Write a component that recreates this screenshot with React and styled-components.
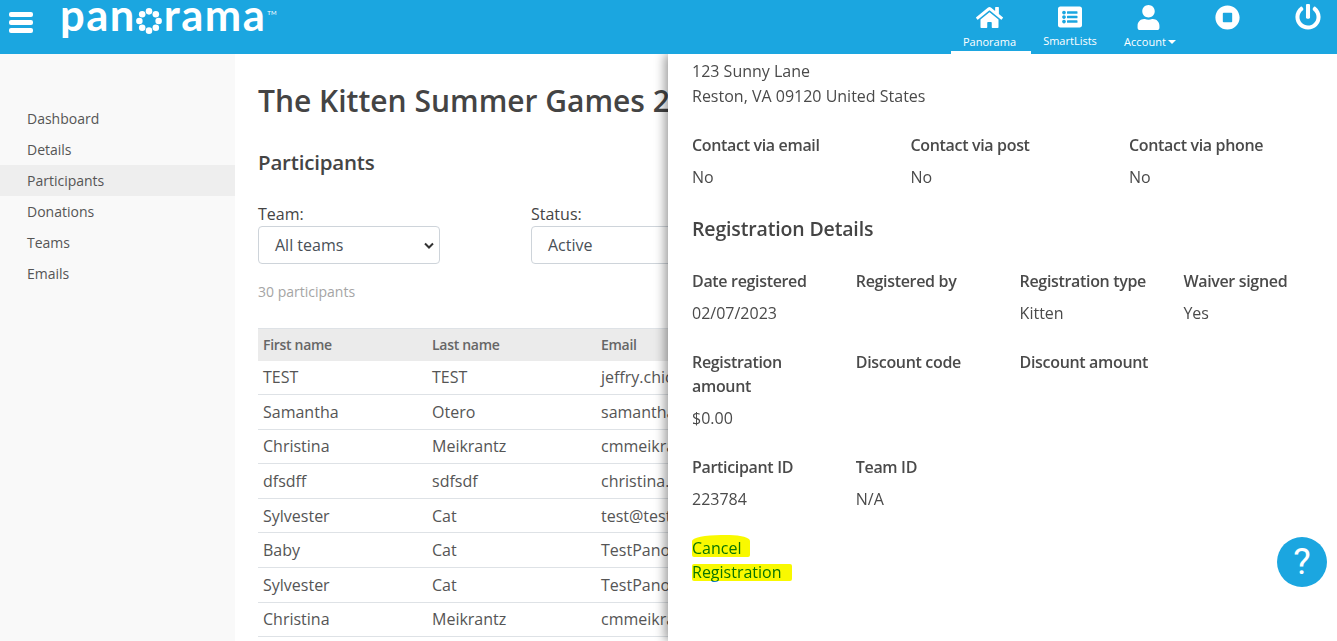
import React from "react";
import styled, { createGlobalStyle } from "styled-components";
import { FaHome, FaListAlt, FaUser, FaStopCircle, FaPowerOff } from "react-icons/fa";

const Global = createGlobalStyle`
  html, body { margin: 0; padding: 0; height: 100%; overflow: hidden; background: #fff; }
  body { font-family: "Open Sans", "Liberation Sans", sans-serif; color: #495057; font-size: 16px; }
  #root { height: 100%; }
`;

const Page = styled.div`
  position: relative;
  width: 1337px;
  height: 641px;
  overflow: hidden;
  display: flex;
  flex-direction: column;
`;

const Header = styled.header`
  height: 54px;
  flex: none;
  background: #1ba6e0;
  display: flex;
  align-items: flex-start;
  position: relative;
  z-index: 3;
`;

const Burger = styled.div`
  margin: 12px 0 0 9px;
  width: 24px;
  display: flex;
  flex-direction: column;
  gap: 3px;
`;
const BurgerBar = styled.span`
  display: block;
  height: 5px;
  background: #fff;
  border-radius: 2px;
`;

const Logo = styled.div`
  margin: 0 0 0 27px;
  display: flex;
  align-items: baseline;
  color: #fff;
  font-family: "Lato", sans-serif;
  font-weight: 700;
  font-size: 43.5px;
  line-height: 28px;
  letter-spacing: 1.5px;
`;
const LogoDots = styled.svg`
  width: 26px;
  height: 26px;
  margin: 8px 2px 0 0;
  align-self: flex-start;
`;
const Tm = styled.sup`
  font-size: 6px;
  font-weight: 400;
  line-height: 1;
  align-self: flex-start;
  margin: 10px 0 0 1px;
  letter-spacing: 0;
`;

const Nav = styled.nav`
  margin-left: auto;
  display: flex;
  height: 54px;
`;
const NavItem = styled.div`
  width: ${p => p.$w}px;
  height: 54px;
  box-sizing: border-box;
  color: #fff;
  display: flex;
  flex-direction: column;
  align-items: center;
  padding-left: ${p => p.$pl || 0}px;
  padding-right: ${p => p.$pr || 0}px;
  border-bottom: ${p => (p.$active ? "3px solid #fff" : "3px solid transparent")};
  font-size: 11px;
  line-height: 14px;
`;
const NavIcon = styled.div`
  height: ${p => p.$h || 35}px;
  margin-right: ${p => p.$mr || 0}px;
  display: flex;
  align-items: center;
  justify-content: center;
  font-size: ${p => p.$size}px;
  svg { display: block; }
`;
const Caret = styled.span`
  display: inline-block;
  width: 0;
  height: 0;
  margin-left: 2px;
  vertical-align: 2px;
  border-left: 4px solid transparent;
  border-right: 4px solid transparent;
  border-top: 4px solid #fff;
`;
const AccountLabel = styled.span`
  letter-spacing: 0.1px;
`;

const Body = styled.div`
  flex: 1;
  display: flex;
  min-height: 0;
`;

const Sidebar = styled.aside`
  width: 235px;
  flex: none;
  background: #f9f9f9;
  padding-top: 49px;
  box-sizing: border-box;
`;
const SideItem = styled.div`
  height: 31px;
  line-height: 31px;
  padding-left: 27px;
  font-size: 14px;
  color: #555;
  background: ${p => (p.$active ? "#eeeeee" : "transparent")};
`;

const Main = styled.main`
  flex: 1;
  padding: 0 0 0 23px;
  min-width: 0;
  overflow: hidden;
  white-space: nowrap;
`;
const Title = styled.h1`
  margin: 25px 0 0;
  font-size: 30px;
  line-height: 44px;
  font-weight: 600;
  color: #444;
`;
const SubTitle = styled.h2`
  margin: 24px 0 0;
  font-size: 20.5px;
  line-height: 30px;
  font-weight: 600;
  letter-spacing: -0.2px;
  color: #444;
`;
const Filters = styled.div`
  display: flex;
  gap: 91px;
  margin-top: 27px;
`;
const Filter = styled.div`
  width: 182px;
  flex: none;
`;
const FilterLabel = styled.div`
  font-size: 16px;
  line-height: 20px;
  height: 22px;
  color: #444;
`;
const Select = styled.div`
  height: 38px;
  width: ${p => p.$w || 182}px;
  box-sizing: border-box;
  border: 1px solid #ced4da;
  border-radius: 4px;
  padding-left: 16px;
  line-height: 36px;
  display: flex;
  justify-content: space-between;
  align-items: center;
  color: #495057;
`;
const Chevron = styled.svg`
  width: 10px;
  height: 7px;
  margin-right: 5px;
`;
const Count = styled.div`
  margin-top: 18px;
  font-size: 14px;
  line-height: 20px;
  color: #a5a5a5;
`;
const Table = styled.div`
  margin-top: 26px;
  width: 1000px;
`;
const HeadRow = styled.div`
  display: grid;
  grid-template-columns: 169px 169px 1fr;
  height: 32.5px;
  align-items: center;
  background: #ebebeb;
  border-top: 1px solid #dee2e6;
  box-sizing: border-box;
  padding-left: 5px;
  font-size: 14px;
  font-weight: 600;
  letter-spacing: -0.3px;
  color: #666;
`;
const Row = styled.div`
  display: grid;
  grid-template-columns: 169px 169px 1fr;
  height: 34.6px;
  align-items: center;
  border-bottom: 1px solid #dee2e6;
  box-sizing: border-box;
  padding-left: 5px;
  color: #555;
`;

const Panel = styled.section`
  position: absolute;
  z-index: 2;
  top: 54px;
  right: 0;
  bottom: 0;
  width: 669px;
  background: #fff;
  box-sizing: border-box;
  padding: 5px 24px 0;
  box-shadow: -3px 0 10px rgba(0, 0, 0, 0.4);
  color: #4a4a4a;
`;
const Address = styled.div`
  line-height: 25px;
`;
const Grid = styled.div`
  display: grid;
  grid-template-columns: repeat(${p => p.$cols}, ${p => p.$w}px);
  margin-top: ${p => p.$mt || 0}px;
  row-gap: ${p => p.$gap || 0}px;
`;
const Field = styled.div`
  padding-right: 20px;
`;
const Label = styled.div`
  font-weight: 600;
  line-height: 24px;
  letter-spacing: -0.33px;
`;
const Value = styled.div`
  margin-top: ${p => p.$mt || 8}px;
  line-height: 24px;
  min-height: 24px;
`;
const SectionTitle = styled.h3`
  margin: 26px 0 0;
  font-size: 19.5px;
  line-height: 28px;
  font-weight: 600;
  letter-spacing: -0.15px;
  color: #444;
`;
const CancelLink = styled.div`
  margin-top: 24px;
  display: flex;
  flex-direction: column;
  color: #0a78c8;
`;
const Mark = styled.span`
  display: block;
  box-sizing: border-box;
  width: ${p => p.$w}px;
  height: ${p => p.$h}px;
  padding-top: ${p => p.$pt || 0}px;
  line-height: ${p => p.$h - (p.$pt || 0)}px;
  background: #f9f900;
  border-radius: ${p => p.$r};
  margin-top: ${p => p.$mt || 0}px;
`;
const MarkText = styled.span`
  mix-blend-mode: multiply;
`;

const Help = styled.div`
  position: absolute;
  z-index: 4;
  left: 1277px;
  top: 537px;
  width: 50px;
  height: 50px;
  border-radius: 50%;
  background: #1ba6e0;
  color: #fff;
  text-align: center;
  font-family: "Roboto", sans-serif;
  font-size: 37px;
  font-weight: 400;
  line-height: 50px;
`;

const people = [
  ["TEST", "TEST", "jeffry.chicoine@test.com"],
  ["Samantha", "Otero", "samantha.otero@test.com"],
  ["Christina", "Meikrantz", "cmmeikrantz@test.com"],
  ["dfsdff", "sdfsdf", "christina.meikrantz@test.com"],
  ["Sylvester", "Cat", "test@test.com"],
  ["Baby", "Cat", "TestPanorama@test.com"],
  ["Sylvester", "Cat", "TestPanorama@test.com"],
  ["Christina", "Meikrantz", "cmmeikrantz@test.com"],
];

const dots = [0, 45, 90, 135, 180, 225, 270, 315];

export default function App() {
  return (
    <Page>
      <Global />
      <Header>
        <Burger>
          <BurgerBar />
          <BurgerBar />
          <BurgerBar />
        </Burger>
        <Logo>
          pan
          <LogoDots viewBox="0 0 27 27">
            {dots.map(a => (
              <circle
                key={a}
                cx={13.5 + 10 * Math.cos((a * Math.PI) / 180)}
                cy={13.5 + 10 * Math.sin((a * Math.PI) / 180)}
                r="3.4"
                fill="#fff"
              />
            ))}
          </LogoDots>
          rama
          <Tm>TM</Tm>
        </Logo>
        <Nav>
          <NavItem $w={80} $pr={3} $active>
            <NavIcon $size={27} $mr={1}><FaHome /></NavIcon>
            Panorama
          </NavItem>
          <NavItem $w={78}>
            <NavIcon $size={24} $h={34}><FaListAlt /></NavIcon>
            SmartLists
          </NavItem>
          <NavItem $w={82}>
            <NavIcon $size={25} $h={35} $mr={4}><FaUser /></NavIcon>
            <AccountLabel>Account<Caret /></AccountLabel>
          </NavItem>
          <NavItem $w={72}>
            <NavIcon $size={25} $h={34}><FaStopCircle /></NavIcon>
          </NavItem>
          <NavItem $w={74} $pl={16}>
            <NavIcon $size={26} $h={34}><FaPowerOff /></NavIcon>
          </NavItem>
        </Nav>
      </Header>
      <Body>
        <Sidebar>
          <SideItem>Dashboard</SideItem>
          <SideItem>Details</SideItem>
          <SideItem $active>Participants</SideItem>
          <SideItem>Donations</SideItem>
          <SideItem>Teams</SideItem>
          <SideItem>Emails</SideItem>
        </Sidebar>
        <Main>
          <Title>The Kitten Summer Games 2023</Title>
          <SubTitle>Participants</SubTitle>
          <Filters>
            <Filter>
              <FilterLabel>Team:</FilterLabel>
              <Select>
                All teams
                <Chevron viewBox="0 0 10 7">
                  <path d="M1 1.5 L5 5.5 L9 1.5" fill="none" stroke="#333" strokeWidth="2" />
                </Chevron>
              </Select>
            </Filter>
            <Filter>
              <FilterLabel>Status:</FilterLabel>
              <Select>Active</Select>
            </Filter>
          </Filters>
          <Count>30 participants</Count>
          <Table>
            <HeadRow>
              <span>First name</span>
              <span>Last name</span>
              <span>Email</span>
            </HeadRow>
            {people.map((p, i) => (
              <Row key={i}>
                <span>{p[0]}</span>
                <span>{p[1]}</span>
                <span>{p[2]}</span>
              </Row>
            ))}
          </Table>
        </Main>
      </Body>
      <Panel>
        <Address>
          123 Sunny Lane
          <br />
          Reston, VA 09120 United States
        </Address>
        <Grid $cols={3} $w={218.5} $mt={24}>
          <Field><Label>Contact via email</Label><Value>No</Value></Field>
          <Field><Label>Contact via post</Label><Value>No</Value></Field>
          <Field><Label>Contact via phone</Label><Value>No</Value></Field>
        </Grid>
        <SectionTitle>Registration Details</SectionTitle>
        <Grid $cols={4} $w={163.8} $mt={26} $gap={25}>
          <Field><Label>Date registered</Label><Value>02/07/2023</Value></Field>
          <Field><Label>Registered by</Label><Value /></Field>
          <Field><Label>Registration type</Label><Value>Kitten</Value></Field>
          <Field><Label>Waiver signed</Label><Value>Yes</Value></Field>
          <Field><Label>Registration amount</Label><Value>$0.00</Value></Field>
          <Field><Label>Discount code</Label></Field>
          <Field><Label>Discount amount</Label></Field>
          <Field />
          <Field><Label>Participant ID</Label><Value>223784</Value></Field>
          <Field><Label>Team ID</Label><Value>N/A</Value></Field>
        </Grid>
        <CancelLink>
          <Mark $w={58} $h={22} $pt={4} $r="50% 35% 2px 2px / 6px 6px 2px 2px"><MarkText>Cancel</MarkText></Mark>
          <Mark $w={100} $h={17} $mt={7} $r="2px"><MarkText>Registration</MarkText></Mark>
        </CancelLink>
      </Panel>
      <Help>?</Help>
    </Page>
  );
}
